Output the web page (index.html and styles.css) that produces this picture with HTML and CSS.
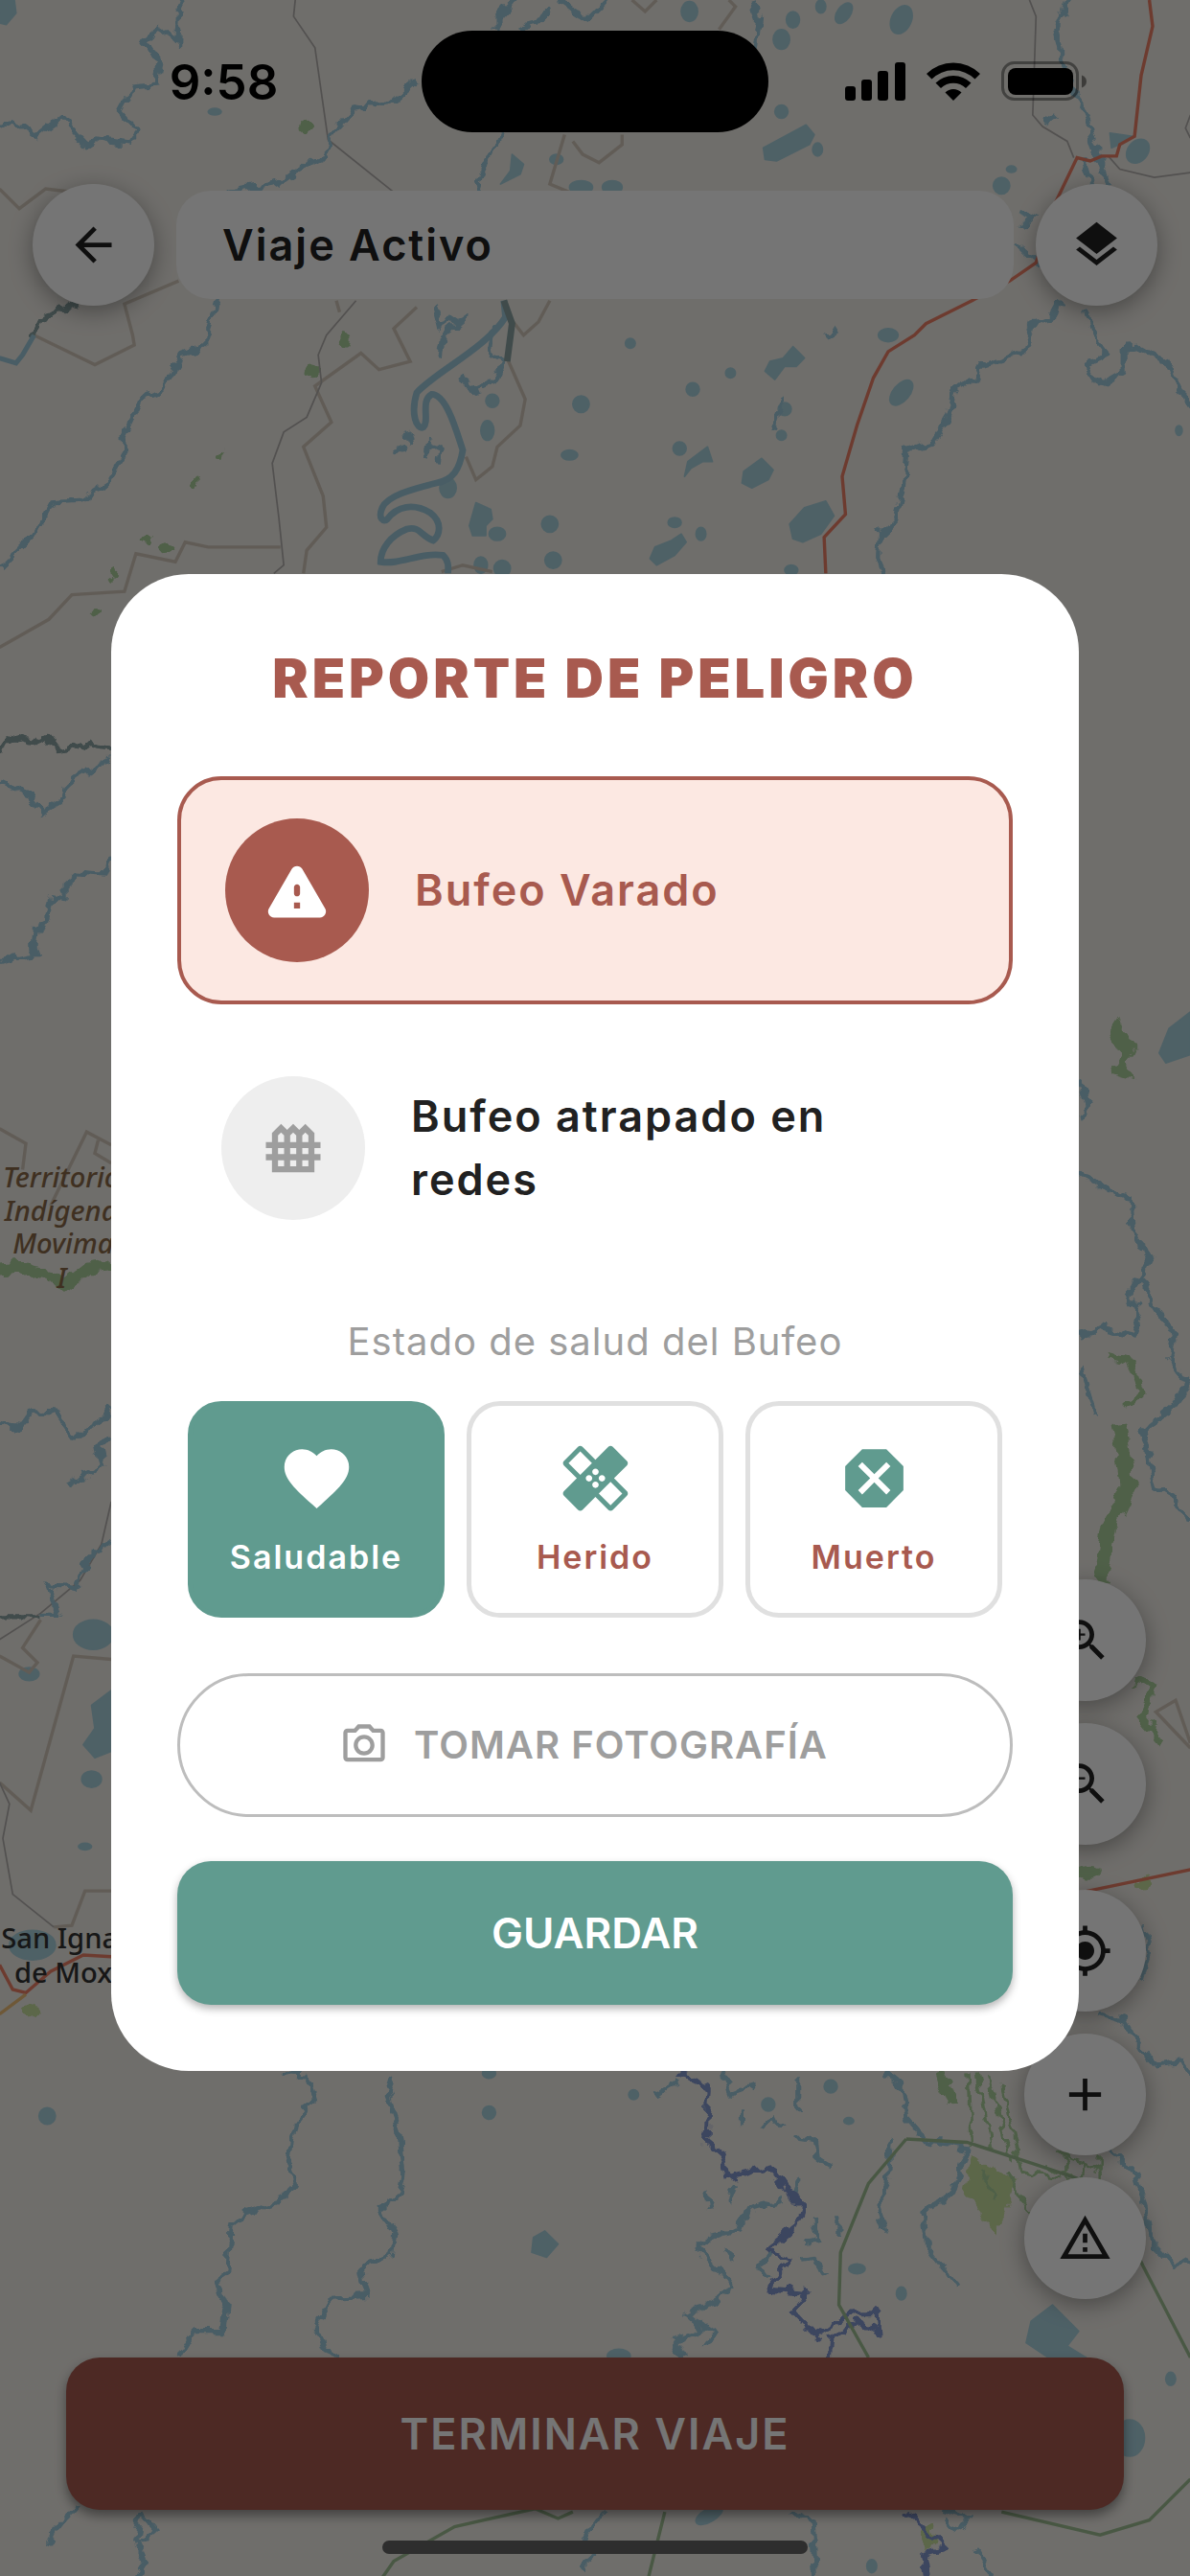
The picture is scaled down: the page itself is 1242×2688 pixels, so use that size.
FILE: index.html
```
<!DOCTYPE html>
<html lang="es">
<head>
  <meta charset="UTF-8">
  <meta name="viewport" content="width=device-width, initial-scale=1">
  <title>Viaje Activo</title>
  <link rel="stylesheet" href="styles.css">
</head>
<body>

  <div class="screen">

    <!-- Mapa de fondo -->
    <svg class="map" viewBox="0 0 725 1568" preserveAspectRatio="xMidYMid slice" aria-hidden="true">
      <defs>
        <filter id="meander" x="-5%" y="-5%" width="110%" height="110%">
          <feTurbulence type="fractalNoise" baseFrequency="0.13" numOctaves="2" seed="4"/>
          <feDisplacementMap in="SourceGraphic" scale="9" xChannelSelector="R" yChannelSelector="G"/>
        </filter>
      </defs>
      <rect width="725" height="1568" fill="#f2efe9"/>

      <!-- Bosques -->
      <g class="forest" filter="url(#meander)">
        <path d="M680 620L693 637L685 648L690 657L677 653L682 643L675 628Z"/>
        <path d="M592 1311L620 1329L606 1360L587 1331Z" class="grass"/>
        <ellipse cx="187" cy="77" rx="4" ry="3"/>
        <ellipse cx="210" cy="207" rx="3" ry="4"/>
        <ellipse cx="190" cy="226" rx="4" ry="4"/>
        <ellipse cx="135" cy="277" rx="2" ry="3"/>
        <ellipse cx="120" cy="293" rx="2" ry="4"/>
        <ellipse cx="102" cy="333" rx="4" ry="3"/>
        <ellipse cx="90" cy="329" rx="3" ry="3"/>
        <ellipse cx="69" cy="349" rx="2" ry="5"/>
        <ellipse cx="58" cy="373" rx="3" ry="2"/>
        <ellipse cx="663" cy="1140" rx="8" ry="5"/>
        <ellipse cx="18" cy="1224" rx="6" ry="4" class="grass"/>
        <ellipse cx="697" cy="1146" rx="5" ry="4" class="grass"/>
        <ellipse cx="566" cy="1544" rx="4" ry="8" class="grass"/>
      </g>
      <g class="forest-line" filter="url(#meander)">
        <path d="M0 772L12 771L33 777L40 783L54 772L68 770" stroke-width="7"/>
        <path d="M674 825L689 829L695 847L686 856" stroke-width="4"/>
        <path d="M681 866L684 882L687 905L676 928L670 962" stroke-width="9"/>
        <path d="M691 1023L702 1026L695 1045L708 1061" stroke-width="5"/>
        <path d="M573 1262L580 1281" stroke-width="4"/>
        <path d="M590 1262L592 1306M596 1262L604 1309M602 1264L616 1316M610 1268L622 1322M622 1322L646 1326M636 1318L662 1330M644 1310L672 1322M650 1314L650 1336M660 1316L656 1340M598 1320L606 1340M614 1322L628 1348M670 1312L670 1330" stroke-width="2"/>
      </g>

      <!-- Lagunas -->
      <g class="lake">
        <path d="M0 0H9L10 8L4 15L0 14Z"/>
        <ellipse cx="420" cy="7" rx="5" ry="6"/>
        <ellipse cx="483" cy="12" rx="4" ry="5"/>
        <ellipse cx="500" cy="4" rx="3" ry="4"/>
        <ellipse cx="514" cy="8" rx="4" ry="7" transform="rotate(35 514 8)"/>
        <ellipse cx="549" cy="12" rx="6" ry="9" transform="rotate(25 549 12)"/>
        <ellipse cx="476" cy="24" rx="5" ry="6"/>
        <path d="M491 76L496 82L493 88L473 98L466 97L465 90Z"/>
        <ellipse cx="498" cy="91" rx="3" ry="4"/>
        <ellipse cx="476" cy="68" rx="4" ry="4"/>
        <ellipse cx="131" cy="68" rx="4" ry="2"/>
        <ellipse cx="693" cy="92" rx="6" ry="8" transform="rotate(40 693 92)"/>
        <path d="M676 81L690 83L684 87L677 90Z"/>
        <ellipse cx="610" cy="113" rx="5" ry="5"/>
        <ellipse cx="616" cy="103" rx="3" ry="2"/>
        <ellipse cx="354" cy="114" rx="7" ry="4"/>
        <ellipse cx="373" cy="114" rx="6" ry="4"/>
        <path d="M312 94L319 100L317 106L305 112L311 104Z"/>
        <ellipse cx="339" cy="97" rx="4" ry="3"/>
        <ellipse cx="384" cy="209" rx="3" ry="3"/>
        <path d="M483 211L490 218L485 223L478 223L472 231L466 226L469 220L477 218Z"/>
        <ellipse cx="445" cy="227" rx="3" ry="3"/>
        <ellipse cx="422" cy="237" rx="4" ry="4"/>
        <ellipse cx="354" cy="246" rx="5" ry="5"/>
        <ellipse cx="300" cy="244" rx="4" ry="4"/>
        <ellipse cx="297" cy="262" rx="4" ry="6"/>
        <ellipse cx="347" cy="277" rx="5" ry="3"/>
        <ellipse cx="414" cy="273" rx="4" ry="4"/>
        <path d="M431 272L434 281L428 281L421 285L417 290L419 281Z"/>
        <path d="M464 279L471 286L468 292L458 297L452 294L453 287Z"/>
        <ellipse cx="549" cy="239" rx="5" ry="9" transform="rotate(40 549 239)"/>
        <ellipse cx="478" cy="249" rx="4" ry="4"/>
        <ellipse cx="476" cy="265" rx="3" ry="3"/>
        <ellipse cx="541" cy="204" rx="6" ry="4"/>
        <path d="M503 305L508 314L500 325L489 330L483 328L481 319L490 309Z"/>
        <path d="M415 325L418 330L411 338L400 344L396 340L399 333L409 329Z"/>
        <path d="M290 306L299 310L300 316L296 320V326L288 326L286 320Z"/>
        <ellipse cx="303" cy="325" rx="5" ry="4"/>
        <ellipse cx="335" cy="319" rx="5" ry="5"/>
        <ellipse cx="337" cy="341" rx="5" ry="5"/>
        <ellipse cx="411" cy="318" rx="4" ry="3"/>
        <ellipse cx="427" cy="325" rx="3" ry="4"/>
        <ellipse cx="273" cy="297" rx="5" ry="6"/>
        <ellipse cx="293" cy="344" rx="4" ry="5"/>
        <ellipse cx="306" cy="346" rx="5" ry="5"/>
        <ellipse cx="482" cy="347" rx="4" ry="3"/>
        <ellipse cx="718" cy="262" rx="2" ry="3"/>
        <path d="M725 616L712 626L706 641L710 647L725 642Z"/>
        <ellipse cx="57" cy="995" rx="12" ry="9"/>
        <path d="M68 1029L56 1038L58 1052L51 1062L58 1070L68 1066Z"/>
        <ellipse cx="56" cy="1083" rx="6" ry="5"/>
        <ellipse cx="18" cy="1019" rx="6" ry="4"/>
        <ellipse cx="52" cy="1124" rx="4" ry="2"/>
        <ellipse cx="20" cy="1184" rx="14" ry="9"/>
        <ellipse cx="29" cy="1288" rx="5" ry="5"/>
        <ellipse cx="298" cy="1286" rx="4" ry="4"/>
        <ellipse cx="298" cy="1262" rx="4" ry="3"/>
        <ellipse cx="386" cy="1275" rx="3" ry="3"/>
        <path d="M332 1358L340 1366L333 1374L324 1371L325 1362Z"/>
        <ellipse cx="468" cy="1281" rx="4" ry="4"/>
        <ellipse cx="506" cy="1270" rx="4" ry="4"/>
        <ellipse cx="517" cy="1291" rx="3" ry="2"/>
        <ellipse cx="522" cy="1381" rx="5" ry="3"/>
        <ellipse cx="549" cy="1396" rx="3" ry="4"/>
        <path d="M641 1403L657 1419L650 1428L663 1436H640L625 1426L628 1413Z"/>
        <ellipse cx="377" cy="1434" rx="7" ry="4"/>
        <ellipse cx="713" cy="1448" rx="3" ry="4"/>
        <ellipse cx="688" cy="1484" rx="9" ry="11"/>
        <ellipse cx="432" cy="1531" rx="9" ry="4" transform="rotate(-30 432 1531)"/>
        <ellipse cx="531" cy="1562" rx="3" ry="4"/>
      </g>

      <!-- Límites y caminos -->
      <g class="border">
        <path d="M444 0L448 4L438 18M385 0L393 7L400 0M344 82L335 112L347 117M379 82L379 88L365 99L355 94L349 86"/>
        <path d="M0 115L12 127L28 115L45 117M109 171L76 185L81 204L82 210L58 222L21 204"/>
        <path d="M254 187L240 200L250 220L231 225L220 215L192 235L202 257L185 272L197 302L199 321L187 335L185 349"/>
        <path d="M205 183L207 190M309 218L320 243L317 259L303 272L300 284L290 292L284 278M335 183L328 196L319 204L312 195"/>
        <path d="M171 333H127L113 330L107 342L83 337L76 360L44 362L30 377L0 394"/>
        <path d="M0 687L16 696L14 712M31 734L53 689L68 697M60 694L58 702L68 708"/>
        <path d="M68 1010L45 1008L19 1102L0 1085M0 1008L18 1018L23 1012L14 1003L25 986M68 1151L52 1151L44 1172L33 1173"/>
        <path d="M725 1061L716 1035L704 1042L725 1064M269 348L282 344L300 348"/>
      </g>
      <g class="track">
        <path d="M180 0L179 10L192 29L200 85L240 117M217 183L199 204L194 216L196 233L187 254L173 263L166 282L170 315L173 344L167 349"/>
        <path d="M627 0L631 10L629 70L635 77L650 86L654 96M725 105L703 108L682 103L675 95M725 70L722 78L725 84"/>
        <path d="M0 998L25 982L49 962L62 940L68 914M0 1085L6 1098L2 1119L8 1153L33 1173"/>
      </g>

      <!-- Ríos -->
      <g class="river" filter="url(#meander)">
        <path d="M112 0L109 8L108 25L97 18L88 25L98 39L95 52L81 53L73 68L84 80L79 87L60 84L53 89L37 72L23 83L9 73L0 77"/>
        <path d="M254 49L240 62L217 66L202 82L199 95L185 101L171 111L139 117"/>
        <path d="M370 0L358 12L340 0M314 0L303 12V18M335 4L330 12L322 14L319 20M458 0L462 12L460 29M305 82L296 100L291 117"/>
        <path d="M650 0L643 18L647 39L655 58L661 66L668 93L675 113M636 76L644 70M660 98L664 112M620 128L630 132L622 140M618 148L632 160"/>
        <path d="M132 183L125 204V211L111 216L99 237L86 243L75 266L76 276L65 294L49 304L32 305L21 325L0 346"/>
        <path d="M265 186L268 198L285 192M285 192L270 205L268 218M300 200L298 216L306 220M306 220L302 232L288 238L280 226"/>
        <path d="M646 183L640 194L629 198L624 214L599 222L594 231L582 237L578 253L569 268L552 274L550 296L546 315L536 325L535 340L539 349"/>
        <path d="M661 187L666 206L674 216L662 222L670 234L684 226V212L693 211L712 222L725 249"/>
        <path d="M248 262L250 270M258 280L262 270L268 272L267 282M240 275L248 272M476 243L472 264M503 205L510 200"/>
        <path d="M0 476L18 484L27 494L40 486L41 478L48 472L67 461"/>
        <path d="M68 521L64 532L49 531L40 539V547L32 546L29 560L22 565L21 576L23 581L10 583L0 586"/>
        <path d="M0 867L12 869L20 859L34 860L45 875L58 869L68 856M43 903L63 892L60 879L68 876M25 982L36 982L30 965L47 967L55 948L68 938"/>
        <path d="M658 657L663 673L658 682M658 714L675 725L688 729L689 745L694 759L701 764L695 776L687 788L695 800L690 813L671 808L658 814"/>
        <path d="M695 778L702 792L715 813L713 827L724 843L713 858L696 872L704 905L716 913L725 928M658 831L664 850L667 862"/>
        <path d="M696 1171L700 1189L695 1206M669 1225L685 1230L695 1247L704 1257L720 1255L727 1265M677 1309L691 1322L697 1345L704 1368L716 1380L727 1374"/>
        <path d="M171 1262L187 1263L192 1277L180 1293L176 1315L180 1329L173 1339L150 1347L141 1355L139 1383L132 1388L138 1403L136 1419L118 1419L109 1435M48 1524L35 1539L30 1548"/>
        <path d="M240 1262L236 1275L243 1295L246 1321L243 1337L232 1345L240 1359L238 1373L220 1380L224 1398L202 1399L193 1417L199 1431L208 1435M86 1529L83 1545L89 1559L83 1569M86 1529L95 1540L86 1548"/>
        <path d="M476 1339L455 1345L451 1357L435 1361L425 1367L439 1383L446 1393L430 1403L418 1409L428 1418L411 1425L416 1435"/>
        <path d="M414 1266L400 1276M441 1262L446 1275L460 1270M452 1284V1294M464 1295L470 1288L476 1296M486 1266V1284M483 1301L497 1303L498 1314L506 1319M488 1326L484 1336M488 1375L496 1374L503 1385M470 1370L462 1380L468 1388M495 1350L498 1364L488 1366M510 1350V1362M444 1340L448 1330M432 1345L430 1335M440 1370L448 1376M424 1412L436 1420L430 1428"/>
        <path d="M539 1262L550 1271L552 1289L564 1303L589 1307L580 1335L562 1347L564 1367L583 1391M543 1301L541 1329L534 1343L539 1358"/>
        <path d="M481 1529L495 1535L497 1569M368 1529L356 1545L362 1556L354 1563M574 1528L590 1532L584 1540L574 1534M594 1552L604 1569"/>
      </g>
      <g class="river wide">
        <path d="M307 183L308 193C296 212 266 226 254 239C250 252 254 262 258 260C262 256 256 244 263 240C272 240 278 262 282 274C280 286 276 292 266 294C250 298 236 302 233 309C230 316 234 318 236 316C242 308 252 306 262 312C270 318 268 326 264 329C256 326 256 320 248 322C238 326 232 334 232 342C244 344 256 336 270 338C274 342 273 346 273 349"/>
        <path d="M307 183L312 197L309 220" class="shore"/>
      </g>
      <g class="river shore" filter="url(#meander)">
        <path d="M46 184L25 195L21 204"/>
        <path d="M0 458L4 451L12 449L23 452L29 449L35 457L41 456L49 452L58 455L68 456M0 984L25 984"/>
      </g>
      <g class="river">
        <path d="M21 204L14 216L10 221L0 218"/>
      </g>
      <g class="river deep" filter="url(#meander)">
        <path d="M414 1262L432 1271L430 1303L440 1312L444 1325L469 1319L481 1335L489 1343L485 1355L467 1369L481 1375L468 1393L492 1395L483 1407L497 1422L518 1408L534 1408L535 1420L522 1413L506 1423L505 1435"/>
        <path d="M550 1529L559 1535L576 1551L562 1555L564 1569"/>
      </g>

      <!-- Carreteras -->
      <g class="trunk">
        <path d="M552 1302L589 1304L629 1317L656 1326L680 1345L696 1379L725 1435"/>
        <path d="M552 1302L529 1329L512 1371L511 1403L529 1435M610 1529L670 1543L700 1534L725 1509"/>
        <path d="M349 1529L340 1533L326 1527L277 1538L240 1559L233 1569M405 1529L395 1569"/>
      </g>
      <g class="road">
        <path d="M700 0L702 16L695 46L691 83L682 88L680 95L671 95L664 98L656 96L643 123L631 160L615 171L592 183L564 197L557 204L541 214L532 230L522 259L513 290L515 313L502 327L503 349"/>
        <path d="M0 1196L8 1211L16 1213L31 1200L51 1190L68 1191M658 1152L725 1138"/>
        <path d="M0 1226L16 1214" class="minor"/>
      </g>

      <g class="reserve">
        <text x="2" y="723">Territorio</text>
        <text x="3" y="743">Indígena</text>
        <text x="8" y="763">Movima</text>
        <text x="35" y="784">I</text>
      </g>
      <g class="town">
        <text x="1" y="1186">San Ignacio</text>
        <text x="9" y="1207">de Moxos</text>
      </g>
    </svg>

    <header class="top-bar">
      <button class="round-btn" aria-label="Volver">
        <svg class="icon" viewBox="0 0 24 24"><path d="M20 11H7.83l5.59-5.59L12 4l-8 8 8 8 1.41-1.41L7.83 13H20v-2z"/></svg>
      </button>
      <h1 class="page-title">Viaje Activo</h1>
      <button class="round-btn" aria-label="Capas">
        <svg class="icon" viewBox="0 0 24 24"><path d="M11.99 18.54l-7.37-5.73L3 14.07l9 7 9-7-1.63-1.27-7.38 5.74zM12 16l7.36-5.73L21 9l-9-7-9 7 1.63 1.27L12 16z"/></svg>
      </button>
    </header>

    <div class="map-controls">
      <button class="round-btn" aria-label="Acercar">
        <svg class="icon" viewBox="0 0 24 24"><path d="M15.5 14h-.79l-.28-.27C15.41 12.59 16 11.11 16 9.5 16 5.91 13.09 3 9.5 3S3 5.91 3 9.5 5.91 16 9.5 16c1.61 0 3.09-.59 4.23-1.57l.27.28v.79l5 4.99L20.49 19l-4.99-5zm-6 0C7.01 14 5 11.99 5 9.5S7.01 5 9.5 5 14 7.01 14 9.5 11.99 14 9.5 14zm.5-7H9v2H7v1h2v2h1v-2h2V9h-2V7z"/></svg>
      </button>
      <button class="round-btn" aria-label="Alejar">
        <svg class="icon" viewBox="0 0 24 24"><path d="M15.5 14h-.79l-.28-.27C15.41 12.59 16 11.11 16 9.5 16 5.91 13.09 3 9.5 3S3 5.91 3 9.5 5.91 16 9.5 16c1.61 0 3.09-.59 4.23-1.57l.27.28v.79l5 4.99L20.49 19l-4.99-5zm-6 0C7.01 14 5 11.99 5 9.5S7.01 5 9.5 5 14 7.01 14 9.5 11.99 14 9.5 14zM7 9h5v1H7z"/></svg>
      </button>
      <button class="round-btn spaced" aria-label="Mi ubicación">
        <svg class="icon" viewBox="0 0 24 24"><path d="M12 8c-2.21 0-4 1.79-4 4s1.79 4 4 4 4-1.79 4-4-1.79-4-4-4zm8.94 3A8.994 8.994 0 0 0 13 3.06V1h-2v2.06A8.994 8.994 0 0 0 3.06 11H1v2h2.06A8.994 8.994 0 0 0 11 20.94V23h2v-2.06A8.994 8.994 0 0 0 20.94 13H23v-2h-2.06zM12 19c-3.87 0-7-3.13-7-7s3.13-7 7-7 7 3.13 7 7-3.13 7-7 7z"/></svg>
      </button>
      <button class="round-btn" aria-label="Agregar">
        <svg class="icon" viewBox="0 0 24 24"><path d="M19 13h-6v6h-2v-6H5v-2h6V5h2v6h6v2z"/></svg>
      </button>
      <button class="round-btn" aria-label="Reportar peligro">
        <svg class="icon" viewBox="0 0 24 24"><path d="M12 5.99L19.53 19H4.47L12 5.99M12 2L1 21h22L12 2zm1 14h-2v2h2v-2zm0-6h-2v4h2v-4z"/></svg>
      </button>
    </div>

    <button class="end-btn">TERMINAR VIAJE</button>
  </div>

  <div class="overlay">
    <div class="dialog" role="dialog" aria-labelledby="dialog-title">
      <h2 id="dialog-title">REPORTE DE PELIGRO</h2>

      <div class="options">
        <button class="option selected" aria-pressed="true">
          <span class="option-icon">
            <svg viewBox="0 0 24 24"><path d="M4.47 21h15.06c1.54 0 2.5-1.67 1.73-3L13.73 4.99c-.77-1.33-2.69-1.33-3.46 0L2.74 18c-.77 1.33.19 3 1.73 3zM12 14c-.55 0-1-.45-1-1v-2c0-.55.45-1 1-1s1 .45 1 1v2c0 .55-.45 1-1 1zm1 4h-2v-2h2v2z"/></svg>
          </span>
          <span class="option-text">Bufeo Varado</span>
        </button>
        <button class="option" aria-pressed="false">
          <span class="option-icon">
            <svg viewBox="0 0 24 24"><path d="M21 12v-2h-2V7l-3-3-2 2-2-2-2 2-2-2-3 3v3H3v2h2v2H3v2h2v4h14v-4h2v-2h-2v-2h2zm-5-5.17l1 1V10h-2V7.83l.59-.59.41-.41zm-4 0l.59.59.41.41V10h-2V7.83l.41-.41.59-.59zM11 14v-2h2v2h-2zm2 2v2h-2v-2h2zM7 7.83l1-1 .59.59.41.41V10H7V7.83zM7 12h2v2H7v-2zm0 4h2v2H7v-2zm10 2h-2v-2h2v2zm0-4h-2v-2h2v2z"/></svg>
          </span>
          <span class="option-text">Bufeo atrapado en redes</span>
        </button>
      </div>

      <p class="health-label" id="health-label">Estado de salud del Bufeo</p>
      <div class="health" role="group" aria-labelledby="health-label">
        <button class="health-card selected" aria-pressed="true">
          <svg viewBox="0 0 24 24"><path d="M12 21.35l-1.45-1.32C5.4 15.36 2 12.28 2 8.5 2 5.42 4.42 3 7.5 3c1.74 0 3.41.81 4.5 2.09C13.09 3.81 14.76 3 16.5 3 19.58 3 22 5.42 22 8.5c0 3.78-3.4 6.86-8.55 11.54L12 21.35z"/></svg>
          <span>Saludable</span>
        </button>
        <button class="health-card" aria-pressed="false">
          <svg viewBox="0 0 24 24"><path d="M17.73 12.02l3.98-3.98c.39-.39.39-1.02 0-1.41l-4.34-4.34c-.39-.39-1.02-.39-1.41 0l-3.98 3.98L8 2.29C7.8 2.1 7.55 2 7.29 2c-.25 0-.51.1-.7.29L2.25 6.63c-.39.39-.39 1.02 0 1.41l3.98 3.98L2.25 16c-.39.39-.39 1.02 0 1.41l4.34 4.34c.39.39 1.02.39 1.41 0l3.98-3.98 3.98 3.98c.2.2.45.29.71.29.26 0 .51-.1.71-.29l4.34-4.34c.39-.39.39-1.02 0-1.41l-3.99-3.98zM12 9c.55 0 1 .45 1 1s-.45 1-1 1-1-.45-1-1 .45-1 1-1zm-4.71 1.96L3.66 7.34l3.63-3.63 3.62 3.62-3.62 3.63zM10 13c-.55 0-1-.45-1-1s.45-1 1-1 1 .45 1 1-.45 1-1 1zm2 2c-.55 0-1-.45-1-1s.45-1 1-1 1 .45 1 1-.45 1-1 1zm2-4c.55 0 1 .45 1 1s-.45 1-1 1-1-.45-1-1 .45-1 1-1zm2.66 9.34l-3.63-3.62 3.63-3.63 3.62 3.62-3.62 3.63z"/></svg>
          <span>Herido</span>
        </button>
        <button class="health-card" aria-pressed="false">
          <svg viewBox="0 0 24 24"><path d="M15.73 3H8.27L3 8.27v7.46L8.27 21h7.46L21 15.73V8.27L15.73 3zM17 15.74L15.74 17 12 13.26 8.26 17 7 15.74 10.74 12 7 8.26 8.26 7 12 10.74 15.74 7 17 8.26 13.26 12 17 15.74z"/></svg>
          <span>Muerto</span>
        </button>
      </div>

      <button class="photo-btn">
        <svg viewBox="0 0 24 24"><path d="M14.12 4l1.83 2H20v12H4V6h4.05l1.83-2h4.24M15 2H9L7.17 4H4c-1.1 0-2 .9-2 2v12c0 1.1.9 2 2 2h16c1.1 0 2-.9 2-2V6c0-1.1-.9-2-2-2h-3.17L15 2zm-3 7c1.65 0 3 1.35 3 3s-1.35 3-3 3-3-1.35-3-3 1.35-3 3-3m0-2c-2.76 0-5 2.24-5 5s2.24 5 5 5 5-2.24 5-5-2.24-5-5-5z"/></svg>
        <span>TOMAR FOTOGRAFÍA</span>
      </button>
      <button class="save-btn">GUARDAR</button>
    </div>
  </div>

  <!-- Barra de estado del teléfono -->
  <div class="status-bar">
    <div class="status-left">9:58</div>
    <div class="island"></div>
    <div class="status-right">
      <svg class="signal" viewBox="0 0 63 40">
        <rect x="0" y="25" width="11" height="15" rx="3"/>
        <rect x="17" y="18" width="11" height="22" rx="3"/>
        <rect x="34" y="9" width="11" height="31" rx="3"/>
        <rect x="52" y="0" width="11" height="40" rx="3"/>
      </svg>
      <svg class="wifi" viewBox="0 0 56 40">
        <path d="M28 40L19.500 31.500A12 12 0 0 1 36.500 31.500Z"/>
        <path d="M9.500 21.500A26.500 26.500 0 0 1 46.500 21.500L41 27A18.500 18.500 0 0 0 15 27Z"/>
        <path d="M0 12A40 40 0 0 1 56 12L50.500 17.500A32 32 0 0 0 5.500 17.500Z"/>
      </svg>
      <svg class="battery" viewBox="0 0 90 42">
        <rect x="1.500" y="1.500" width="78" height="38" rx="12" fill="none" stroke="#000" stroke-opacity=".4" stroke-width="3"/>
        <rect x="7" y="7" width="68" height="28" rx="8"/>
        <path d="M84 14.500C87 15.500 89 18 89 21S87 26.500 84 27.500Z" opacity=".45"/>
      </svg>
    </div>
  </div>
  <div class="home-indicator"></div>

</body>
</html>
```
FILE: styles.css
```
* {
  box-sizing: border-box;
}

body {
  margin: 0;
  font-family: Inter, "Liberation Sans", sans-serif;
  color: #212121;
}

button {
  font-family: inherit;
  border: none;
  padding: 0;
  cursor: pointer;
}

svg {
  display: block;
  fill: currentColor;
}

h1,
h2,
p {
  margin: 0;
}

.screen {
  position: relative;
  display: flex;
  flex-direction: column;
  min-height: 100vh;
  padding: 192px 0 69px;
  overflow: hidden;
}

/* Mapa */

.map {
  position: absolute;
  inset: 0;
  width: 100%;
  height: 100%;
}

.forest {
  fill: #add19e;
}

.forest .grass {
  fill: #c8e0a0;
}

.forest-line {
  fill: none;
  stroke: #add19e;
}

.lake {
  fill: #aad3df;
  stroke: #aad3df;
  stroke-linejoin: round;
}

.border {
  fill: none;
  stroke: #d3c9bc;
  stroke-width: 2;
}

.track {
  fill: none;
  stroke: #b4b0ae;
  stroke-width: 1;
}

.river {
  fill: none;
  stroke: #9fcbdc;
  stroke-width: 3;
}

.wide {
  stroke-width: 4;
}

.shore {
  stroke: #8ba4a4;
}

.deep {
  stroke: #8498d0;
}

.trunk {
  fill: none;
  stroke: #a0c094;
  stroke-width: 2;
}

.road {
  fill: none;
  stroke: #ee8168;
  stroke-width: 2;
}

.road .minor {
  stroke: #f0bf78;
}

.reserve,
.town {
  font-family: "Noto Sans", sans-serif;
  font-size: 17px;
  font-weight: 500;
}

.reserve {
  font-style: italic;
  fill: #8a6a48;
}

.town {
  fill: #333;
}

/* Barra superior */

.top-bar {
  position: relative;
  display: flex;
  align-items: center;
  gap: 23px;
  padding: 0 34px;
}

.round-btn {
  display: flex;
  flex: none;
  align-items: center;
  justify-content: center;
  width: 127px;
  height: 127px;
  border-radius: 50%;
  background: #fff;
  color: #212121;
  box-shadow: 0 6px 24px rgba(0, 0, 0, 0.35);
}

.icon {
  width: 57px;
  height: 57px;
}

.page-title {
  flex: 1;
  padding: 0 48px;
  border-radius: 36px;
  background: #fff;
  font-size: 45px;
  font-weight: 600;
  line-height: 113px;
  letter-spacing: 2px;
}

.map-controls {
  position: relative;
  display: flex;
  flex-direction: column;
  align-items: flex-end;
  gap: 23px;
  margin: auto 46px 61px;
}

.spaced {
  margin-top: 24px;
}

.end-btn {
  position: relative;
  height: 159px;
  margin: 0 69px;
  border-radius: 35px;
  background: #a85a4f;
  color: #fff;
  font-size: 45px;
  font-weight: 600;
  letter-spacing: 2px;
  box-shadow: 0 6px 12px rgba(0, 0, 0, 0.4);
}

/* Diálogo */

.overlay {
  position: fixed;
  inset: 0;
  display: flex;
  align-items: center;
  padding: 71px 116px 0;
  background: rgba(0, 0, 0, 0.54);
}

.dialog {
  flex: 1;
  padding: 69px;
  border-radius: 81px;
  background: #fff;
}

.dialog h2 {
  color: #a85a4f;
  font-size: 56px;
  font-weight: 900;
  line-height: 80px;
  letter-spacing: 4px;
  text-align: center;
}

.options {
  display: flex;
  flex-direction: column;
  gap: 35px;
  margin-top: 62px;
}

.option {
  display: flex;
  align-items: center;
  gap: 48px;
  padding: 40px 46px;
  border-radius: 46px;
  background: #fff;
  color: #212121;
  text-align: left;
}

.option.selected {
  border: 4px solid #a85a4f;
  background: #fce8e2;
  color: #a85a4f;
}

.option-icon {
  display: flex;
  flex: none;
  align-items: center;
  justify-content: center;
  width: 150px;
  height: 150px;
  border-radius: 50%;
  background: #eee;
  color: #9e9e9e;
}

.option-icon svg {
  width: 76px;
  height: 76px;
}

.selected .option-icon {
  background: #a85a4f;
  color: #fff;
}

.option-text {
  max-width: 540px;
  font-size: 45px;
  font-weight: 600;
  line-height: 66px;
  letter-spacing: 2px;
}

.health-label {
  margin-top: 57px;
  color: #9e9e9e;
  font-size: 40px;
  line-height: 60px;
  letter-spacing: 1px;
  text-align: center;
}

.health {
  display: grid;
  grid-template-columns: repeat(3, 1fr);
  gap: 23px;
  margin: 32px 11px 0;
}

.health-card {
  display: flex;
  flex-direction: column;
  align-items: center;
  gap: 18px;
  padding: 35px 0 34px;
  border: 5px solid #e0e0e0;
  border-radius: 35px;
  background: #fff;
  color: #a85a4f;
  font-size: 34px;
  font-weight: 600;
  line-height: 48px;
  letter-spacing: 2px;
}

.health-card svg {
  width: 81px;
  height: 81px;
  color: #609b8f;
}

.health-card.selected {
  border-color: #609b8f;
  background: #609b8f;
  color: #fff;
}

.health-card.selected svg {
  color: #fff;
}

.photo-btn {
  display: flex;
  align-items: center;
  justify-content: center;
  gap: 26px;
  width: 100%;
  height: 150px;
  margin-top: 58px;
  padding-right: 24px;
  border: 3px solid #bdbdbd;
  border-radius: 75px;
  background: #fff;
  color: #9e9e9e;
  font-size: 40px;
  font-weight: 600;
  letter-spacing: 1px;
}

.photo-btn svg {
  width: 52px;
  height: 52px;
}

.save-btn {
  width: 100%;
  height: 150px;
  margin-top: 46px;
  border-radius: 35px;
  background: #609b8f;
  color: #fff;
  font-size: 44px;
  font-weight: 600;
  box-shadow: 0 4px 8px rgba(0, 0, 0, 0.3);
}

/* Barra de estado */

.status-bar {
  position: fixed;
  inset: 32px 0 auto;
  display: grid;
  grid-template-columns: 1fr 362px 1fr;
  align-items: center;
  color: #000;
}

.status-left {
  padding-left: 27px;
  font-size: 51px;
  font-weight: 600;
  text-align: center;
}

.island {
  height: 106px;
  border-radius: 53px;
  background: #000;
}

.status-right {
  display: flex;
  align-items: center;
  justify-content: center;
  gap: 22px;
  padding-right: 27px;
}

.signal {
  width: 63px;
  height: 40px;
}

.wifi {
  width: 56px;
  height: 40px;
}

.battery {
  width: 90px;
  height: 42px;
}

.home-indicator {
  position: fixed;
  bottom: 23px;
  left: 50%;
  width: 444px;
  height: 14px;
  margin-left: -222px;
  border-radius: 7px;
  background: #2e2e2e;
}
```
